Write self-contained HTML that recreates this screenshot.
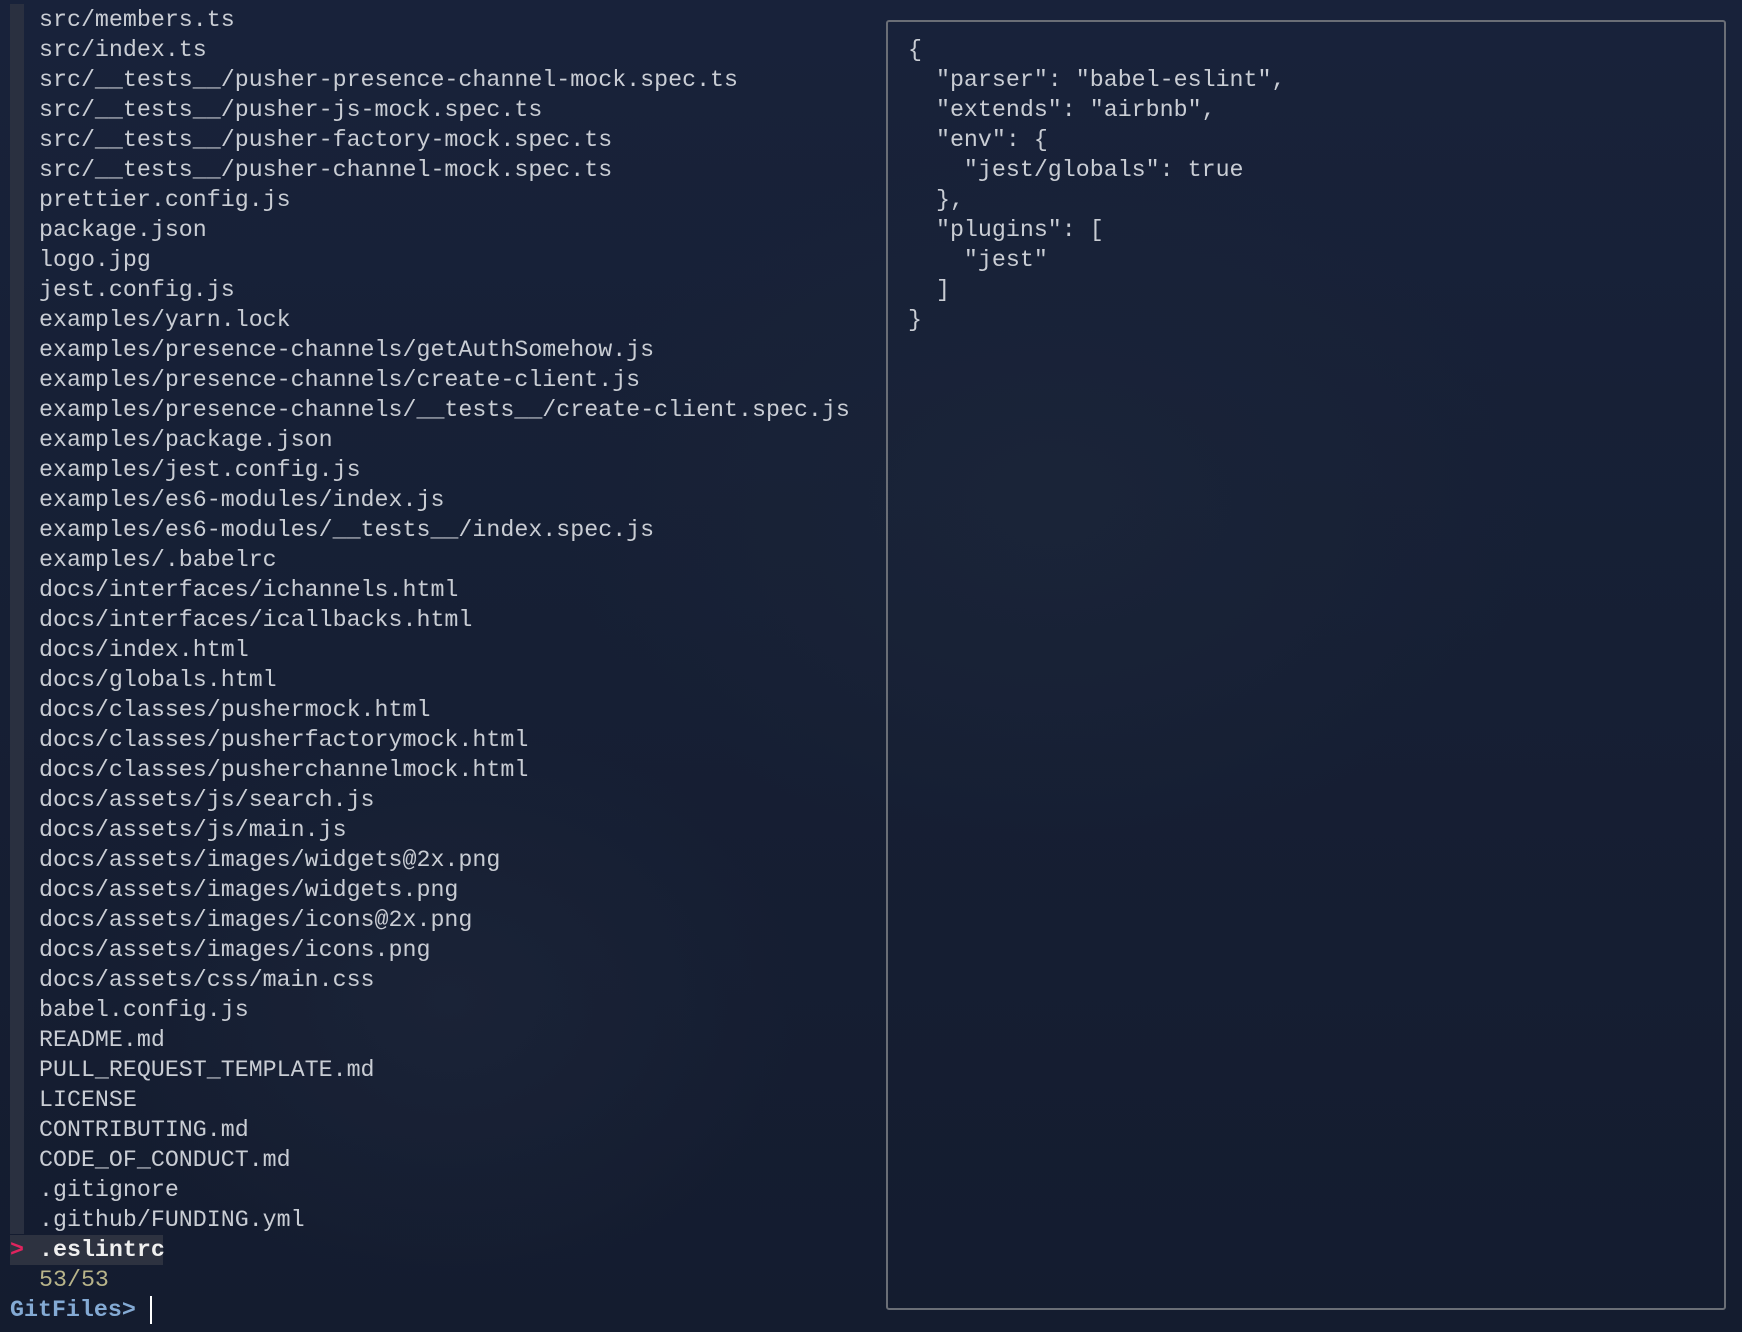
<!DOCTYPE html>
<html><head><meta charset="utf-8"><style>
html,body{margin:0;padding:0}
body{width:1742px;height:1332px;overflow:hidden;position:relative;
background:radial-gradient(ellipse 700px 500px at 1050px 500px,#1a2438 0%,rgba(26,36,56,0) 70%),radial-gradient(ellipse 500px 400px at 450px 1000px,#1a2337 0%,rgba(26,36,56,0) 70%),linear-gradient(180deg,#18223a 0%,#161f34 50%,#141c2f 100%);
font-family:"Liberation Mono","DejaVu Sans Mono",monospace;font-size:23.3px;color:#c9cdd4}
.bar{position:absolute;left:10px;top:4px;width:14px;height:1230px;background:#2a3040}
.l{position:absolute;left:39px;height:30px;line-height:30px;white-space:pre}
.sel{position:absolute;left:10px;top:1235px;width:153px;height:30px;background:#2d3240}
.box{position:absolute;left:886px;top:20px;width:840px;height:1290px;border:2px solid #6a6e76;border-radius:3px;box-sizing:border-box}
.r{position:absolute;left:908px;height:30px;line-height:30px;white-space:pre}
</style></head><body>
<div class="bar"></div>
<div class="sel"></div>
<div class="l" style="top:5px">src/members.ts</div>
<div class="l" style="top:35px">src/index.ts</div>
<div class="l" style="top:65px">src/__tests__/pusher-presence-channel-mock.spec.ts</div>
<div class="l" style="top:95px">src/__tests__/pusher-js-mock.spec.ts</div>
<div class="l" style="top:125px">src/__tests__/pusher-factory-mock.spec.ts</div>
<div class="l" style="top:155px">src/__tests__/pusher-channel-mock.spec.ts</div>
<div class="l" style="top:185px">prettier.config.js</div>
<div class="l" style="top:215px">package.json</div>
<div class="l" style="top:245px">logo.jpg</div>
<div class="l" style="top:275px">jest.config.js</div>
<div class="l" style="top:305px">examples/yarn.lock</div>
<div class="l" style="top:335px">examples/presence-channels/getAuthSomehow.js</div>
<div class="l" style="top:365px">examples/presence-channels/create-client.js</div>
<div class="l" style="top:395px">examples/presence-channels/__tests__/create-client.spec.js</div>
<div class="l" style="top:425px">examples/package.json</div>
<div class="l" style="top:455px">examples/jest.config.js</div>
<div class="l" style="top:485px">examples/es6-modules/index.js</div>
<div class="l" style="top:515px">examples/es6-modules/__tests__/index.spec.js</div>
<div class="l" style="top:545px">examples/.babelrc</div>
<div class="l" style="top:575px">docs/interfaces/ichannels.html</div>
<div class="l" style="top:605px">docs/interfaces/icallbacks.html</div>
<div class="l" style="top:635px">docs/index.html</div>
<div class="l" style="top:665px">docs/globals.html</div>
<div class="l" style="top:695px">docs/classes/pushermock.html</div>
<div class="l" style="top:725px">docs/classes/pusherfactorymock.html</div>
<div class="l" style="top:755px">docs/classes/pusherchannelmock.html</div>
<div class="l" style="top:785px">docs/assets/js/search.js</div>
<div class="l" style="top:815px">docs/assets/js/main.js</div>
<div class="l" style="top:845px">docs/assets/images/widgets@2x.png</div>
<div class="l" style="top:875px">docs/assets/images/widgets.png</div>
<div class="l" style="top:905px">docs/assets/images/icons@2x.png</div>
<div class="l" style="top:935px">docs/assets/images/icons.png</div>
<div class="l" style="top:965px">docs/assets/css/main.css</div>
<div class="l" style="top:995px">babel.config.js</div>
<div class="l" style="top:1025px">README.md</div>
<div class="l" style="top:1055px">PULL_REQUEST_TEMPLATE.md</div>
<div class="l" style="top:1085px">LICENSE</div>
<div class="l" style="top:1115px">CONTRIBUTING.md</div>
<div class="l" style="top:1145px">CODE_OF_CONDUCT.md</div>
<div class="l" style="top:1175px">.gitignore</div>
<div class="l" style="top:1205px">.github/FUNDING.yml</div>
<div class="l" style="top:1235px;left:10px;color:#e0245e;font-weight:bold">&gt;</div>
<div class="l" style="top:1235px;color:#f0f0f0;font-weight:bold">.eslintrc</div>
<div class="l" style="top:1265px;color:#b8b48a">53/53</div>
<div class="l" style="top:1295px;left:10px;color:#84aad4;font-weight:bold">GitFiles&gt;</div>
<div style="position:absolute;left:150px;top:1296px;width:2px;height:28px;background:#fff"></div>
<div class="box"></div>
<div class="r" style="top:35px">{</div>
<div class="r" style="top:65px">  "parser": "babel-eslint",</div>
<div class="r" style="top:95px">  "extends": "airbnb",</div>
<div class="r" style="top:125px">  "env": {</div>
<div class="r" style="top:155px">    "jest/globals": true</div>
<div class="r" style="top:185px">  },</div>
<div class="r" style="top:215px">  "plugins": [</div>
<div class="r" style="top:245px">    "jest"</div>
<div class="r" style="top:275px">  ]</div>
<div class="r" style="top:305px">}</div>
</body></html>
